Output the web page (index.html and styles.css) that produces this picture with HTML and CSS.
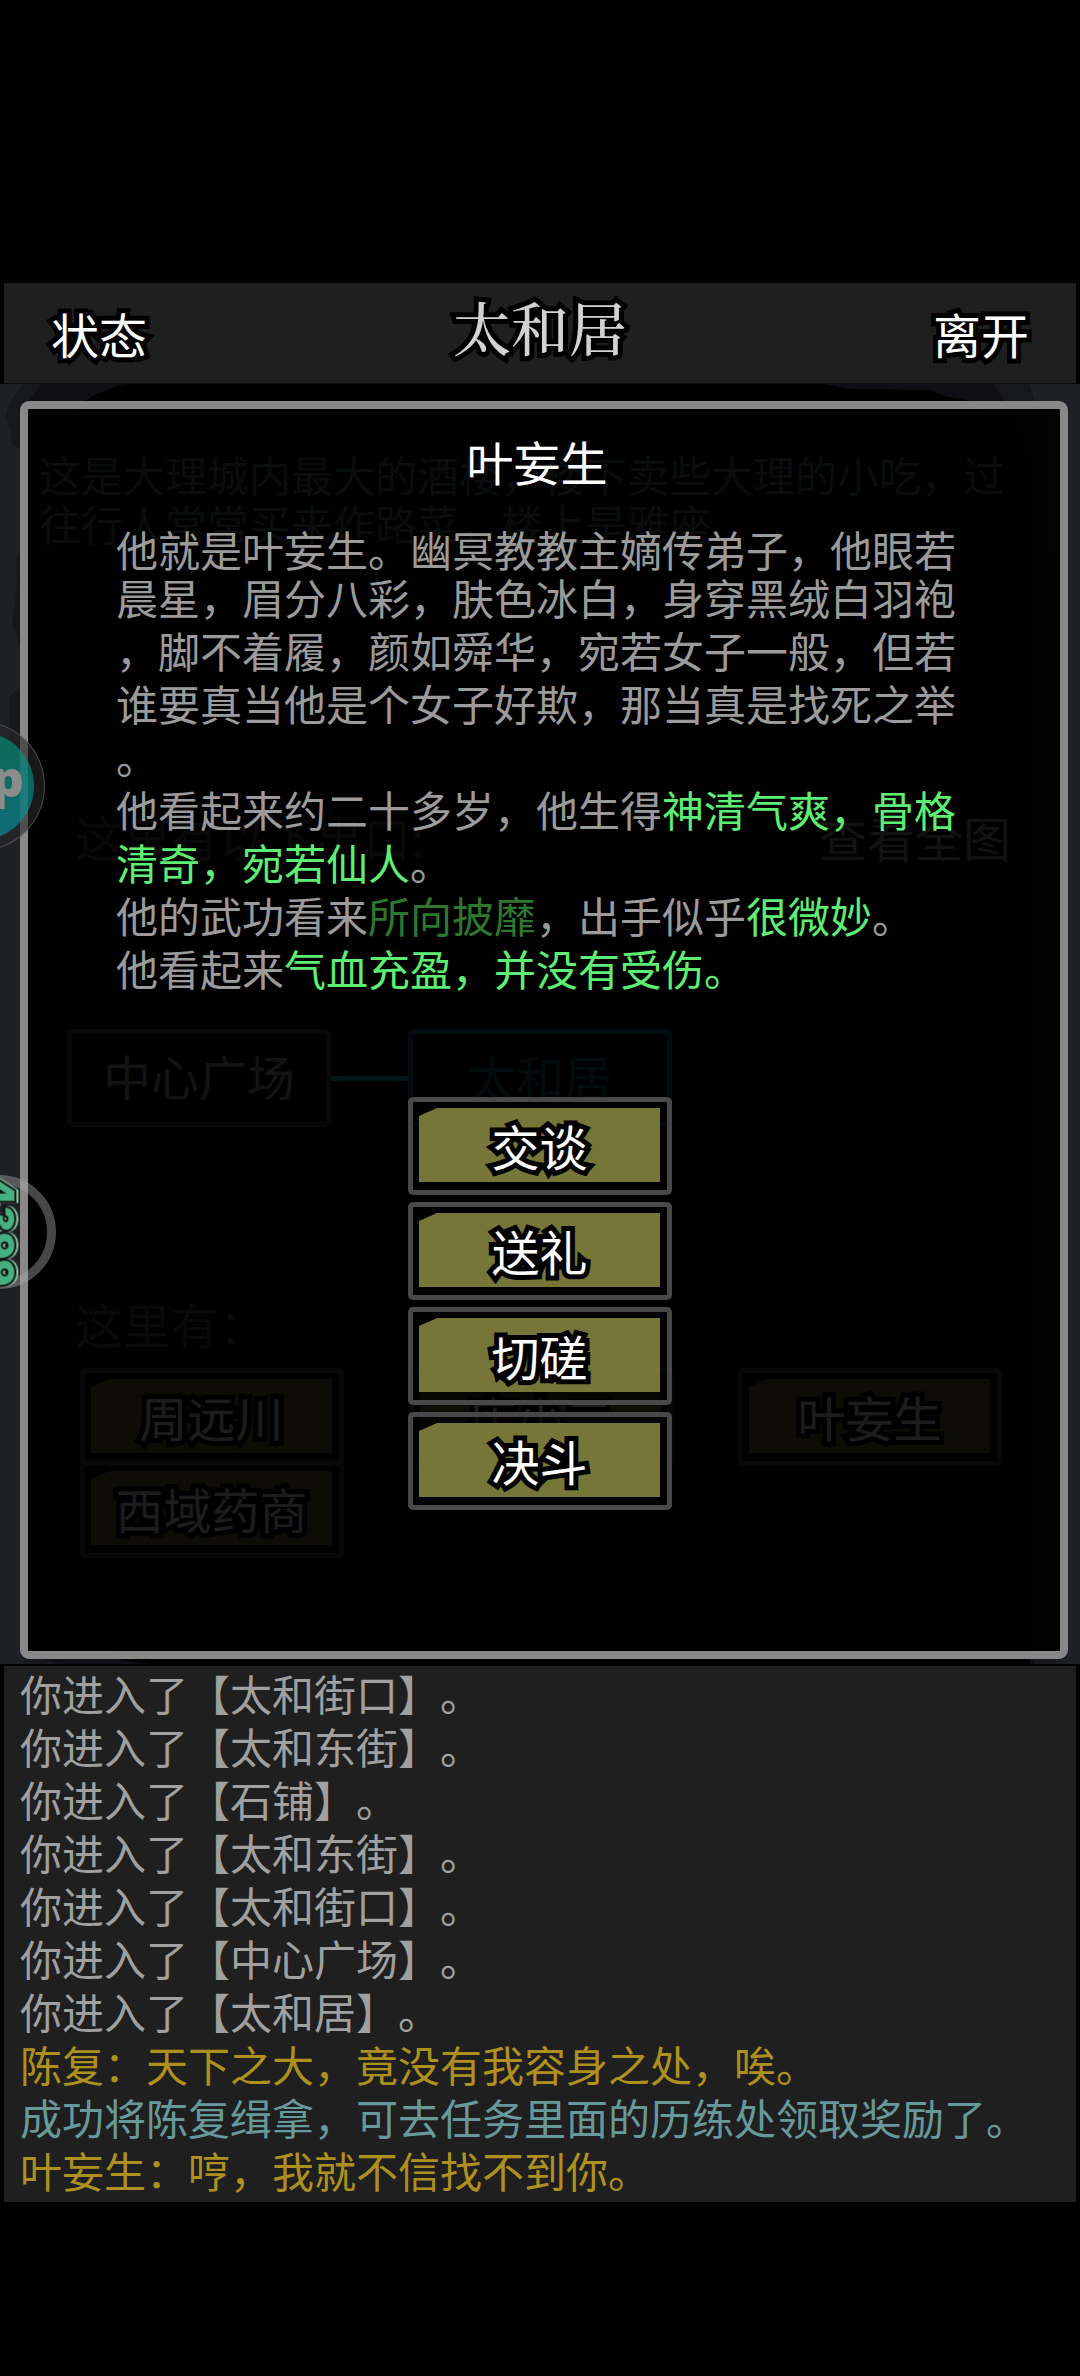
FILE: index.html
```html
<!DOCTYPE html>
<html lang="zh-CN">
<head>
<meta charset="utf-8">
<meta name="viewport" content="width=device-width, initial-scale=1">
<title>太和居</title>
<link rel="stylesheet" href="styles.css">
</head>
<body>
<header class="topbar">
  <button class="topbar-btn" type="button">状态</button>
  <h1 class="place">太和居</h1>
  <button class="topbar-btn" type="button">离开</button>
</header>

<main class="stage">
  <svg class="ink" viewBox="0 0 1080 1280" preserveAspectRatio="none" aria-hidden="true">
    <rect width="1080" height="1280" fill="#1f2026"/>
    <path fill="#17181c" d="M24 0 C10 14 8 24 5 34 L10 44 L12 60 L24 68 L24 164 L16 172 L17 200 L12 240 L20 262 L24 300 L10 312 L9 370 L24 390 L24 1280 L1056 1280 L1050 40 L1034 16 L1030 0 Z"/>
    <path fill="#0e0e14" d="M42 0 L26 20 L28 1270 L60 1280 L1034 1280 L1030 60 L1004 16 L994 0 Z"/>
    <path fill="#000" d="M124 0 L96 10 L84 18 L50 60 L40 1200 L120 1276 L150 1280 L1030 1280 L1030 80 L976 18 L945 12 L930 6 L850 5 L824 0 Z"/>
  </svg>

  <section class="room">
    <p class="room-desc">这是大理城内最大的酒楼，楼下卖些大理的小吃，过往行人常常买来作路菜，楼上是雅座</p>
    <div class="exits-head">
      <span class="label">这里有以下出口:</span>
      <a class="map-link" href="#map">查看全图</a>
    </div>
    <div class="map">
      <button class="node" type="button">中心广场</button>
      <span class="path"></span>
      <button class="node node-current" type="button">太和居</button>
    </div>
    <p class="label people-head">这里有：</p>
    <div class="people">
      <button class="plate" type="button"><span class="plate-face">周远川</span></button>
      <button class="plate" type="button"><span class="plate-face">店小二</span></button>
      <button class="plate" type="button"><span class="plate-face">叶妄生</span></button>
      <button class="plate" type="button"><span class="plate-face">西域药商</span></button>
    </div>
  </section>

  <section class="dialog" role="dialog" aria-labelledby="npc-name">
    <h2 class="npc-name" id="npc-name">叶妄生</h2>
    <p class="npc-desc"><span class="lead">他就是叶妄生。幽冥教教主嫡传弟子，他眼若</span>晨星，眉分八彩，肤色冰白，身穿黑绒白羽袍，脚不着履，颜如舜华，宛若女子一般，但若谁要真当他是个女子好欺，那当真是找死之举。<br>他看起来约二十多岁，他生得<em class="good">神清气爽，骨格清奇，宛若仙人</em>。<br>他的武功看来<em class="deep">所向披靡</em>，出手似乎<em class="good">很微妙</em>。<br>他看起来<em class="good">气血充盈，并没有受伤。</em></p>
    <div class="actions">
      <button class="plate" type="button"><span class="plate-face">交谈</span></button>
      <button class="plate" type="button"><span class="plate-face">送礼</span></button>
      <button class="plate" type="button"><span class="plate-face">切磋</span></button>
      <button class="plate" type="button"><span class="plate-face">决斗</span></button>
    </div>
  </section>

  <div class="float float-tap" aria-hidden="true"><span class="float-tap-disc">p</span></div>
  <div class="float float-portal" aria-hidden="true"><span class="float-portal-text">4399</span></div>
</main>

<ul class="log">
  <li>你进入了【太和街口】。</li>
  <li>你进入了【太和东街】。</li>
  <li>你进入了【石铺】。</li>
  <li>你进入了【太和东街】。</li>
  <li>你进入了【太和街口】。</li>
  <li>你进入了【中心广场】。</li>
  <li>你进入了【太和居】。</li>
  <li class="say">陈复：天下之大，竟没有我容身之处，唉。</li>
  <li class="quest">成功将陈复缉拿，可去任务里面的历练处领取奖励了。</li>
  <li class="say">叶妄生：哼，我就不信找不到你。</li>
</ul>
</body>
</html>
```
FILE: styles.css
```css
* { box-sizing: border-box; }

body {
  margin: 0;
  padding: 283px 0 172px;
  background: #000;
  color: #9b9b9b;
  font-family: "Noto Sans CJK SC", sans-serif;
  font-size: 42px;
  text-spacing-trim: space-all;
  overflow-x: hidden;
}

button {
  margin: 0;
  padding: 0;
  border: 0;
  background: none;
  color: inherit;
  font: inherit;
  cursor: pointer;
}

h1, h2, p, ul { margin: 0; padding: 0; font-weight: 400; }
em { font-style: normal; }

/* top bar */
.topbar {
  display: flex;
  align-items: center;
  justify-content: space-between;
  height: 101px;
  margin: 0 4px;
  padding: 0 47px;
  background: #1f1f1f;
  border-bottom: 1px solid #0c0c0c;
}

.topbar-btn {
  color: #fff;
  font-size: 48px;
  line-height: 56px;
  -webkit-text-stroke: 10px #000;
  stroke-linejoin: round;
  paint-order: stroke fill;
}

.place {
  padding-bottom: 14px;
  color: #d2d2d2;
  font-family: "AR PL UKai CN", KaiTi, STKaiti, "Noto Serif CJK SC", "Noto Sans CJK SC", serif;
  font-size: 58px;
  font-weight: 500;
  line-height: 64px;
  -webkit-text-stroke: 10px #000;
  stroke-linejoin: round;
  paint-order: stroke fill;
}

/* room behind the dialog */
.stage {
  position: relative;
  display: grid;
  grid-template-columns: minmax(0, 1fr);
  padding-bottom: 5px;
  border-bottom: 2px solid #000;
}

.ink {
  position: absolute;
  inset: 0;
  width: 100%;
  height: 100%;
}

.room, .dialog {
  position: relative;
  grid-area: 1 / 1;
}

.room { padding-top: 65px; font-size: 48px; }

.room-desc {
  margin: 0 72px 265px 39px;
  color: #587875;
  font-size: 42px;
  line-height: 49px;
  line-break: anywhere;
}

.exits-head {
  display: flex;
  justify-content: space-between;
  margin: 0 69px 169px 75px;
  line-height: 48px;
}

.label { color: #555; }

.map-link { color: #a0a0a0; text-decoration: none; }

.map {
  display: flex;
  align-items: center;
  margin-left: 67px;
}

.node {
  width: 264px;
  height: 98px;
  padding-bottom: 6px;
  border: 5px solid #484848;
  border-radius: 6px;
  color: #b0b0b0;
}

.node-current { border-color: #10788a; color: #187272; }

.path { width: 77px; height: 5px; background: #10c8c8; }

.people-head { margin: 172px 0 21px 75px; line-height: 48px; }

.people {
  display: grid;
  grid-template-columns: repeat(3, 264px);
  grid-auto-rows: 92px;
  column-gap: 65px;
  margin-left: 80px;
}

/* framed plate button */
.plate {
  display: flex;
  width: 264px;
  height: 98px;
  padding: 6px 7px 8px 6px;
  border: 5px solid #484848;
  border-radius: 5px;
  background: rgba(0, 0, 0, .5);
}

.plate-face {
  flex: 1;
  background: #767638;
  clip-path: polygon(0 8px, 18px 0, 100% 0, 100% 100%, 0 100%);
  color: #fff;
  font-size: 48px;
  line-height: 74px;
  text-align: center;
  -webkit-text-stroke: 10px #000;
  stroke-linejoin: round;
  paint-order: stroke fill;
}

/* dialog */
.dialog {
  margin: 17px 12px 0 20px;
  padding: 24px 102px 141px 88px;
  border: 8px solid #888;
  border-radius: 9px;
  background: rgba(0, 0, 0, .89);
}

.npc-name {
  margin-bottom: 33px;
  color: #fff;
  font-size: 47px;
  line-height: 56px;
  text-align: center;
}

.npc-desc {
  line-height: 53px;
  line-break: anywhere;
}

.lead { display: block; margin-bottom: -5px; }

.good { color: #5eee72; }
.deep { color: #2e782e; }

.actions {
  display: flex;
  flex-direction: column;
  align-items: center;
  gap: 7px;
  margin-top: 103px;
  padding-left: 6px;
}

/* floating bubbles docked to the left edge */
.float {
  position: absolute;
  display: flex;
  align-items: center;
  justify-content: center;
  border-radius: 50%;
}

.float-tap {
  top: 337px;
  left: -85px;
  width: 130px;
  height: 130px;
  border: 1px solid rgba(110, 110, 110, .6);
  background: rgba(40, 40, 40, .6);
}

.float-tap-disc {
  width: 108px;
  height: 108px;
  padding-right: 10px;
  border-radius: 50%;
  background: linear-gradient(rgba(0, 150, 118, .62), rgba(0, 150, 172, .62));
  color: #8c8c8c;
  font-family: "Open Sans", sans-serif;
  font-size: 50px;
  font-weight: 800;
  line-height: 92px;
  text-align: right;
}

.float-portal {
  top: 791px;
  left: -58px;
  width: 114px;
  height: 114px;
  border: 9px solid rgba(170, 170, 170, .42);
}

.float-portal-text {
  color: #45b080;
  font-family: Inter, sans-serif;
  font-size: 40px;
  font-weight: 900;
  line-height: 40px;
  transform: rotate(90deg);
  -webkit-text-stroke: 4px #101010;
  paint-order: stroke fill;
  filter: drop-shadow(0 -2px 0 #8fc8a4);
}

/* message log */
.log {
  margin: 0 4px;
  padding: 0 16px 6px;
  background: #1f1f1f;
  list-style: none;
  color: #a0a0a0;
  line-height: 53px;
}

.say { color: #ae901f; }
.quest { color: #68999a; }
```
